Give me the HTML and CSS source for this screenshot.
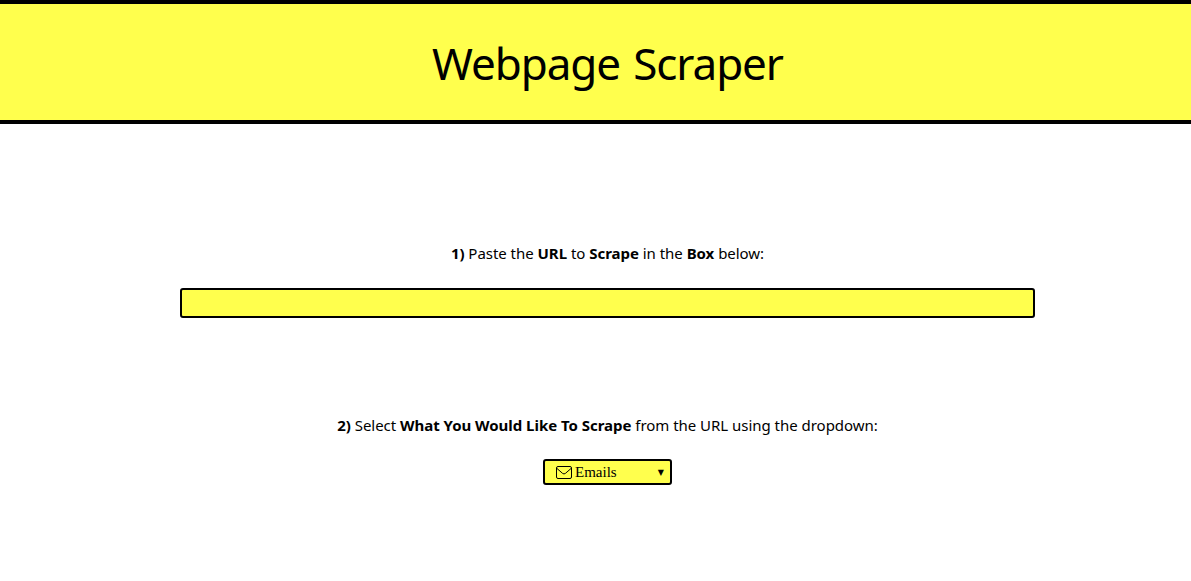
FILE: index.html
```html
<!DOCTYPE html>
<html lang="en">
<head>
  <meta charset="UTF-8" />
  <title>Webpage Scraper</title>
  <link rel="stylesheet" href="styles.css">
</head>
<body>

  <header class="site-header">
    <h1 class="site-title">Webpage Scraper</h1>
  </header>

  <main class="steps">
    <section class="step step-url">
      <p class="step-label"><b>1)</b> Paste the <b>URL</b> to <b>Scrape</b> in the <b>Box</b> below:</p>
      <input type="text" class="url-box" />
    </section>

    <section class="step step-type">
      <p class="step-label"><b>2)</b> Select <b>What You Would Like To Scrape</b> from the URL using the dropdown:</p>
      <div class="dropdown">
        <svg class="mail-icon" viewBox="0 0 16 13" width="16" height="13">
          <rect x="0.5" y="0.5" width="15" height="12" rx="1.5" fill="none" stroke="#000" />
          <path d="M1 2.5 L6.6 7.4 Q8 8.5 9.4 7.4 L15 2.5" fill="none" stroke="#000" />
        </svg>
        <span class="dropdown-value">Emails</span>
        <span class="dropdown-arrow">▼</span>
      </div>
    </section>
  </main>

</body>
</html>
```

FILE: styles.css
```css
:root {
  --yellow: #ffff4d;
}

* {
  box-sizing: border-box;
}

body {
  margin: 0;
  font-family: 'Noto Sans', sans-serif;
  color: #000;
  background-color: #fff;
  overflow: hidden;
}

.site-header {
  height: 124px;
  padding: 2px 0 0 24px;
  background-color: var(--yellow);
  border-top: 4px solid #000;
  border-bottom: 4px solid #000;
  display: flex;
  justify-content: center;
  align-items: center;
}

.site-title {
  margin: 0;
  font-size: 44px;
  font-weight: normal;
  line-height: 60px;
  letter-spacing: -1.1px;
  word-spacing: 3px;
}

.steps {
  padding-left: 24px;
  display: flex;
  flex-direction: column;
  align-items: center;
}

.step {
  display: flex;
  flex-direction: column;
  align-items: center;
}

.step-url {
  margin-top: 119px;
}

.step-type {
  margin-top: 97px;
}

.step-label {
  margin: 0 0 25px;
  font-size: 15px;
  line-height: 20px;
  letter-spacing: -0.03px;
}

.step-type .step-label {
  margin-bottom: 24px;
}

.url-box {
  display: block;
  width: 855px;
  height: 30px;
  background-color: var(--yellow);
  border: 2px solid #000;
  border-radius: 3px;
}

.dropdown {
  width: 129px;
  height: 26px;
  padding: 0 6px 0 11px;
  background-color: var(--yellow);
  border: 2px solid #000;
  border-radius: 3px;
  display: flex;
  align-items: center;
  font-family: 'Liberation Serif', serif;
  font-size: 15px;
}

.mail-icon {
  margin-right: 3px;
}

.dropdown-value {
  flex: 1;
}

.dropdown-arrow {
  font-family: 'DejaVu Sans', sans-serif;
  font-size: 8px;
}
```
